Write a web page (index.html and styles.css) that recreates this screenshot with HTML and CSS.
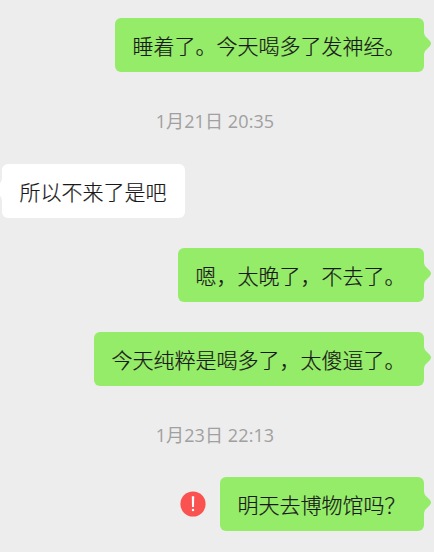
FILE: index.html
```html
<!DOCTYPE html>
<html lang="zh-CN">
<head>
<meta charset="utf-8">
<title>聊天</title>
<link rel="stylesheet" href="styles.css">
</head>
<body>
<main class="chat">
  <div class="row sent"><p class="bubble">睡着了。今天喝多了发神经。</p></div>
  <time class="stamp">1月21日 20:35</time>
  <div class="row received"><p class="bubble">所以不来了是吧</p></div>
  <div class="row sent"><p class="bubble">嗯，太晚了，不去了。</p></div>
  <div class="row sent"><p class="bubble">今天纯粹是喝多了，太傻逼了。</p></div>
  <time class="stamp late">1月23日 22:13</time>
  <div class="row sent">
    <svg class="alert" viewBox="0 0 26 26"><circle cx="13" cy="13" r="12.6" fill="#fa5151"/><path d="M11.8 5.3h2.4l-.2 10.7h-2z" fill="#fff"/><circle cx="13" cy="18.9" r="1.25" fill="#fff"/></svg>
    <p class="bubble">明天去博物馆吗？</p>
  </div>
</main>
</body>
</html>
```
FILE: styles.css
```css
* { box-sizing: border-box; }
body { margin: 0; background: #ededed; font-family: "Noto Sans CJK SC", sans-serif; font-weight: 300; }
.chat { display: flex; flex-direction: column; height: 552px; padding: 18px 10px 0 2px; overflow: hidden; }
.row { display: flex; align-items: center; flex: none; height: 54px; margin-bottom: 30px; }
.sent { justify-content: flex-end; }
.bubble { position: relative; margin: 0; height: 54px; padding: 0 18.5px 0 17.5px; border-radius: 6px; font-size: 21px; line-height: 54px; color: #191919; -webkit-text-stroke: .2px #191919; white-space: nowrap; background: #95ec69; }
.bubble::after { content: ""; position: absolute; top: 15px; right: -7px; width: 7px; height: 21px; background: inherit; clip-path: polygon(0 0, 1px 3px, 6px 8px, 7px 10px, 7px 11px, 6px 13px, 1px 18px, 0 21px); }
.received .bubble { background: #fff; }
.received .bubble::after { right: auto; left: -7px; transform: scaleX(-1); }
.stamp { flex: none; height: 32px; margin-bottom: 30px; padding-left: 4px; text-align: center; font-family: "Open Sans", "Noto Sans CJK SC", sans-serif; font-weight: 400; font-size: 18px; letter-spacing: .1px; line-height: 38px; color: #a0a0a0; }
.late { height: 31px; }
.alert { width: 26px; height: 26px; margin-right: 14px; }
```
